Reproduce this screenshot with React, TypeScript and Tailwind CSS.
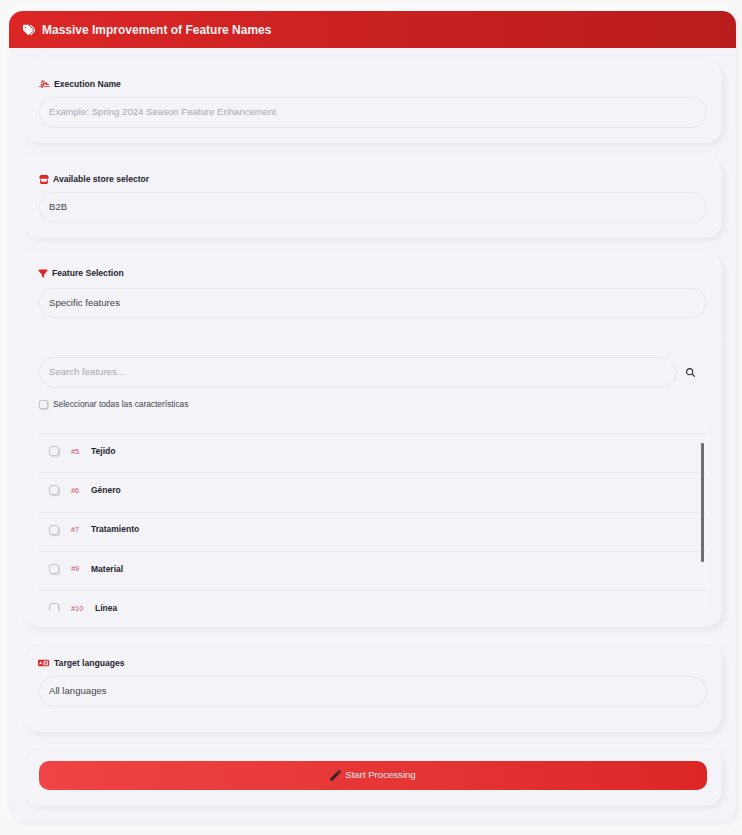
import { FaTags, FaSignature, FaStore, FaFilter, FaLanguage, FaWandMagic, FaMagnifyingGlass } from "react-icons/fa6";
import type { ReactNode } from "react";

const cardCls = "rounded-2xl bg-[#f3f3f8] border-t border-t-[#f8f8fb] shadow-[3px_3px_6px_rgba(0,0,0,0.05),-2px_-2px_4px_rgba(255,255,255,0.3)] pl-4 pr-[15px]";
const inputCls = "h-[30.5px] w-full rounded-[16px] border border-[#e6e6ee] bg-[#f3f3f8] px-[9px] flex items-center text-[9.6px] shadow-[inset_1px_1px_2px_rgba(255,255,255,0.5)]";

function Label({ icon, text, gap }: { icon: ReactNode; text: string; gap: string }) {
  return (
    <div className={`flex items-center h-[12px] text-[8.6px] font-bold text-[#25252d] ${gap}`}>
      <span className="text-[#dc2626] flex items-center">{icon}</span>
      <span>{text}</span>
    </div>
  );
}

function Row({ id, name, idGap }: { id: string; name: string; idGap: string }) {
  return (
    <div className="h-[39.3px] shrink-0 border-t border-[#e9e9ef] flex items-center pl-[10px] pb-[4px]">
      <span className="w-[10px] h-[10px] rounded-[3px] border border-[#c4c4cc] bg-[#f3f3f8] shadow-[1px_1px_1px_rgba(0,0,0,0.12)] shrink-0" />
      <span className={`ml-[12px] text-[7.4px] text-[#d4525f] ${idGap}`}>{id}</span>
      <span className="text-[8.5px] font-bold text-[#25252d]">{name}</span>
    </div>
  );
}

export default function App() {
  return (
    <div className="min-h-[835px] bg-[#f8f8f8] pt-[11px] pl-[9px] font-['Liberation_Sans',Arial,sans-serif]">
      <div className="w-[727px] h-[810px] rounded-[14px] bg-[#f3f3f8] shadow-[2px_2px_6px_rgba(0,0,0,0.06),-3px_-3px_8px_rgba(255,255,255,0.7)] overflow-hidden">
        <div className="h-[37px] bg-gradient-to-r from-[#dc2626] to-[#b91c1c] flex items-center pl-[14px] text-white">
          <FaTags className="w-[12px] h-[12px]" />
          <span className="ml-[7px] text-[12px] font-bold text-[#fdf2f2]">Massive Improvement of Feature Names</span>
        </div>
        <div className="px-[14px] pt-[14px] flex flex-col">
          <div className={`${cardCls} h-[81px] pt-[15px]`}>
            <Label icon={<FaSignature className="w-[11px] h-[10px]" />} text="Execution Name" gap="gap-[4px]" />
            <div className={`${inputCls} mt-[7px] text-[#a9a9b3]`}>Example: Spring 2024 Season Feature Enhancement</div>
          </div>
          <div className={`${cardCls} mt-[14px] h-[81px] pt-[15px]`}>
            <Label icon={<FaStore className="w-[10px] h-[9px]" />} text="Available store selector" gap="gap-[4px]" />
            <div className={`${inputCls} mt-[7px] text-[#44444c]`}>B2B</div>
          </div>
          <div className={`${cardCls} mt-[15px] h-[374px] pt-[13px] flex flex-col`}>
            <Label icon={<FaFilter className="w-[10px] h-[9px] -ml-[1px]" />} text="Feature Selection" gap="gap-[4px]" />
            <div className={`${inputCls} mt-[8.5px] text-[#44444c]`}>Specific features</div>
            <div className="-ml-4 -mr-[15px] mt-[24px] border-t border-[#f7f7fb]" />
            <div className="flex items-center mt-[14px]">
              <div className={`${inputCls} flex-1 text-[#a9a9b3]`}>Search features...</div>
              <div className="w-[30px] h-[30.5px] flex items-center justify-center text-[#25252d] pr-[4px]">
                <FaMagnifyingGlass className="w-[9px] h-[9px]" />
              </div>
            </div>
            <div className="flex items-center mt-[11.5px] h-[11px] text-[8.35px] text-[#44444c] gap-[5px]">
              <span className="w-[9px] h-[9px] rounded-[2px] border border-[#c4c4cc] bg-[#f3f3f8] shadow-[1px_1px_1px_rgba(0,0,0,0.12)]" />
              Seleccionar todas las características
            </div>
            <div className="relative mt-[13px] h-[189px] overflow-hidden pt-[10px] border-r border-b border-[#f7f7fb] flex flex-col">
              <Row id="#5" name="Tejido" idGap="w-[20px]" />
              <Row id="#6" name="Género" idGap="w-[20px]" />
              <Row id="#7" name="Tratamiento" idGap="w-[20px]" />
              <Row id="#9" name="Material" idGap="w-[20px]" />
              <Row id="#10" name="Línea" idGap="w-[24px]" />
              <div className="absolute right-[2px] top-[20px] w-[3px] h-[119px] rounded-[1px] bg-[#6e6e75]" />
            </div>
          </div>
          <div className={`${cardCls} mt-[15px] h-[90px] pt-[14px]`}>
            <Label icon={<FaLanguage className="w-[11px] h-[10px] -ml-[1px]" />} text="Target languages" gap="gap-[5px]" />
            <div className={`${inputCls} mt-[7px] text-[#44444c]`}>All languages</div>
          </div>
          <div className={`${cardCls} mt-[14px] h-[60px] pt-[14px]`}>
            <div className="h-[29px] rounded-[10px] bg-gradient-to-r from-[#ef4444] to-[#dc2626] flex items-center justify-center gap-[4px] text-[9.6px] text-[#fde8e8]">
              <FaWandMagic className="w-[11px] h-[11px] text-[#3a2028]" />
              Start Processing
            </div>
          </div>
        </div>
      </div>
    </div>
  );
}
